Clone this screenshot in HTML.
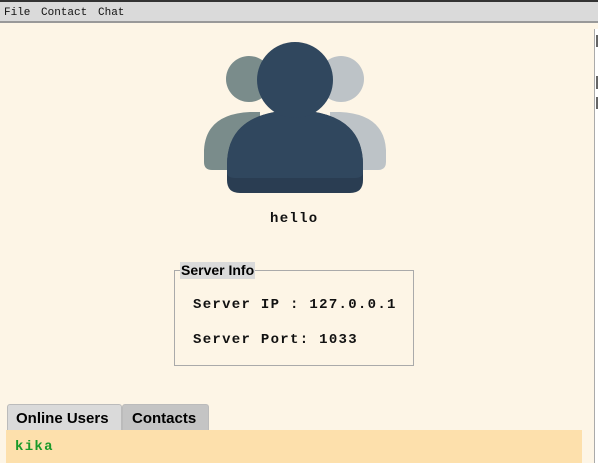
<!DOCTYPE html>
<html><head><style>
body{margin:0;width:598px;height:463px;overflow:hidden;background:#fdf5e6;position:relative;font-family:"Liberation Mono",monospace}
.menu{position:absolute;left:0;top:0;width:598px;height:23px;background:#dadada;border-top:2px solid #333;border-bottom:2px solid #999;box-sizing:border-box}
.menu span{position:absolute;top:5px;font-size:11px;color:#111}
.sb{position:absolute;left:594px;top:29px;width:4px;height:434px;background:#fff;border-left:1px solid #aaa}
.sb i{position:absolute;left:1px;width:3px;background:#666}
.t{position:absolute;font-weight:bold;font-size:14px;letter-spacing:1.3px;color:#111;white-space:pre}
.fs{position:absolute;left:174px;top:270px;width:240px;height:96px;border:1px solid #aaa;box-sizing:border-box}
.lg{position:absolute;left:180px;top:262px;background:#dadada;font:bold 14px "Liberation Sans",sans-serif;padding:0 1px;height:17px;line-height:17px}
.tab{position:absolute;top:404px;height:26px;font:bold 15px "Liberation Sans",sans-serif;line-height:27px;box-sizing:border-box;border:1px solid #bbb;border-bottom:none;border-radius:3px 3px 0 0}
.panel{position:absolute;left:6px;top:430px;width:576px;height:33px;background:#fde0ac}
</style></head><body>
<div class="menu"><span style="left:4px">File</span><span style="left:41px">Contact</span><span style="left:98px">Chat</span></div>
<div class="sb"><i style="top:6px;height:12px"></i><i style="top:47px;height:13px"></i><i style="top:68px;height:12px"></i></div>
<svg style="position:absolute;left:0;top:0" width="598" height="200">
<circle cx="249" cy="79" r="23" fill="#7a8c8b"/>
<path d="M204 162 L204 150 Q206 114 250 112 L260 112 L260 170 L212 170 Q204 170 204 162 Z" fill="#7a8c8b"/>
<circle cx="341" cy="79" r="23" fill="#bdc3c7"/>
<path d="M386 162 L386 150 Q384 114 340 112 L330 112 L330 170 L378 170 Q386 170 386 162 Z" fill="#bdc3c7"/>
<path d="M227 180 L227 165 Q227 112 295 110 Q363 112 363 165 L363 180 Q363 193 350 193 L240 193 Q227 193 227 180 Z" fill="#2a3d52"/>
<path d="M227 172 L227 165 Q227 112 295 110 Q363 112 363 165 L363 172 Q363 178 355 178 L235 178 Q227 178 227 172 Z" fill="#30475e"/>
<circle cx="295" cy="80" r="38" fill="#30475e"/>
</svg>
<div class="t" style="left:270px;top:211px">hello</div>
<div class="fs"></div>
<div class="lg">Server Info</div>
<div class="t" style="left:193px;top:297px">Server IP : 127.0.0.1</div>
<div class="t" style="left:193px;top:332px">Server Port: 1033</div>
<div class="tab" style="left:7px;width:115px;background:#dadada;padding-left:8px">Online Users</div>
<div class="tab" style="left:122px;width:87px;background:#c4c4c4;padding-left:9px">Contacts</div>
<div class="panel"><div class="t" style="left:9px;top:9px;color:#1a9a2a">kika</div></div>
</body></html>
